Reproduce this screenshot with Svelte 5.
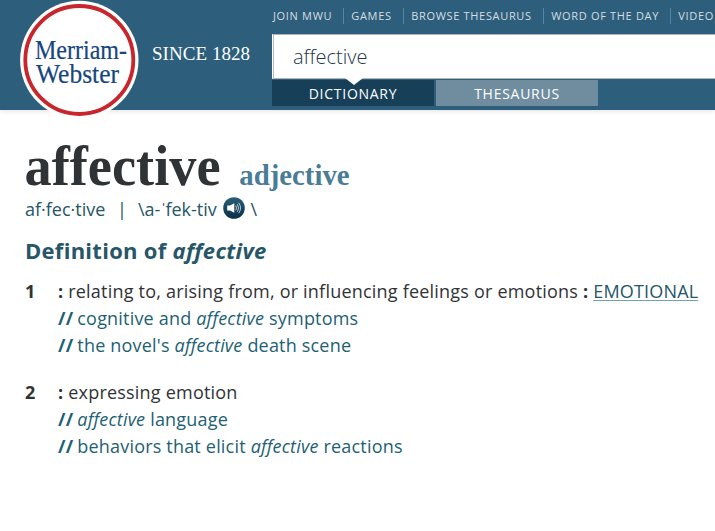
<script>
  const links = [
    { label: 'JOIN MWU', width: 70 },
    { label: 'GAMES', width: 60 },
    { label: 'BROWSE THESAURUS', width: 140 },
    { label: 'WORD OF THE DAY', width: 127 },
    { label: 'VIDEO', width: 60 }
  ];
  const senses = [
    {
      text: 'relating to, arising from, or influencing feelings or emotions',
      link: 'EMOTIONAL',
      examples: [['cognitive and ', ' symptoms'], ["the novel's ", ' death scene']]
    },
    {
      text: 'expressing emotion',
      examples: [['', ' language'], ['behaviors that elicit ', ' reactions']]
    }
  ];
</script>

<div class="page">
  <header>
    <div class="brand">
      <svg class="logo" width="120" height="120" viewBox="0 0 120 120">
        <circle cx="60.3" cy="60" r="59.2" fill="#fff" />
        <circle cx="60.3" cy="60" r="54" fill="#fff" stroke="#c9252c" stroke-width="3.8" />
        <g class="mark" fill="#15467f" stroke="#15467f" stroke-width=".2">
          <text x="16" y="59" textLength="92" lengthAdjust="spacingAndGlyphs">Merriam-</text>
          <text x="17" y="83.2" textLength="83" lengthAdjust="spacingAndGlyphs">Webster</text>
        </g>
      </svg>
      <span class="since">SINCE 1828</span>
    </div>
    <div class="tools">
      <nav>
        {#each links as l}
          <a style:width="{l.width}px">{l.label}</a>
        {/each}
      </nav>
      <div class="search">affective</div>
      <div class="tabs">
        <span class="tab active">DICTIONARY</span>
        <span class="tab">THESAURUS</span>
      </div>
    </div>
  </header>

  <main>
    <div class="entry">
      <svg class="word" width="215" height="56" viewBox="0 0 215 56">
        <text x="-.5" y="51" textLength="196" lengthAdjust="spacingAndGlyphs">affective</text>
      </svg>
      <svg class="pos" width="112" height="56" viewBox="0 0 112 56">
        <text x="-.7" y="51" textLength="110.3" lengthAdjust="spacingAndGlyphs">adjective</text>
      </svg>
    </div>
    <div class="pron">
      <span class="syll">af·​fec·​tive</span>
      <span class="bar">|</span>
      <span class="ipa">\a-<span class="stress">ˈ</span>fek-tiv</span>
      <svg width="22" height="22" viewBox="0 0 22 22">
        <defs>
          <linearGradient id="disc" x2="0" y2="1">
            <stop offset="0" stop-color="#275f79" />
            <stop offset="1" stop-color="#0c2f49" />
          </linearGradient>
        </defs>
        <circle cx="11" cy="11" r="10.8" fill="url(#disc)" />
        <path d="M4.2 8.6H7L11.3 6.2V15.8L7 13.4H4.2Z" fill="#fff" />
        <path d="M12.8 8.6Q14.3 11 12.8 13.4M14.3 7.2Q16.9 11 14.3 14.8M15.7 5.8Q19.4 11 15.7 16.2" fill="none" stroke="#dfe8ed" stroke-width=".8" />
      </svg>
      <span class="close">\</span>
    </div>
    <h2>Definition of <em>affective</em></h2>
    {#each senses as s, i}
      <section>
        <b class="num">{i + 1}</b>
        <div>
          <p class="def"><b>:</b> {s.text}{#if s.link}{' '}<b>:</b> <a class="link">{s.link}</a>{/if}</p>
          {#each s.examples as [before, after]}
            <p class="ex"><b>//</b><span>{before}<em>affective</em>{after}</span></p>
          {/each}
        </div>
      </section>
    {/each}
  </main>
</div>

<style>
  .page {
    width: 715px;
    height: 531px;
    overflow: hidden;
    background: #fff;
    font-family: 'Open Sans', sans-serif;
    color: #303336;
  }
  header {
    display: flex;
    height: 110px;
    background: #2d5f7c;
    box-shadow: 0 1px 5px rgba(0, 0, 0, .12);
  }
  .brand {
    display: flex;
    flex: 0 0 272px;
    padding-left: 19px;
    box-sizing: border-box;
  }
  .logo {
    flex: none;
    height: 120px;
  }
  .mark {
    font: 26.5px 'Liberation Serif', serif;
  }
  .since {
    margin: 43px 0 0 13px;
    font: 19px/22px 'Liberation Serif', serif;
    color: #fff;
    letter-spacing: .05px;
    white-space: nowrap;
  }
  .tools {
    flex: none;
    width: 460px;
  }
  nav {
    display: flex;
    height: 34px;
    padding-top: 8px;
    box-sizing: border-box;
  }
  nav a {
    flex: none;
    height: 16px;
    box-sizing: border-box;
    padding-left: 7.3px;
    border-left: 1px solid #5187a5;
    font-size: 11px;
    line-height: 16px;
    letter-spacing: .67px;
    color: #d5dde1;
    white-space: nowrap;
  }
  nav a:first-child {
    margin-left: 1px;
    padding-left: 0;
    border: 0;
  }
  .search {
    height: 45px;
    box-sizing: border-box;
    border: 1px solid #aeb4b9;
    border-left-color: #fff;
    box-shadow: inset 1px 0 #b3b9be;
    background: #fff;
    padding-left: 20px;
    font-size: 20px;
    font-weight: 300;
    line-height: 44px;
    color: #213848;
  }
  .tabs {
    display: flex;
    gap: 2px;
    padding-top: 1px;
  }
  .tab {
    position: relative;
    width: 162px;
    height: 26px;
    background: #708d9f;
    color: #fff;
    font-size: 14px;
    line-height: 27px;
    letter-spacing: .73px;
    text-align: center;
  }
  .tab.active {
    background: #173f58;
  }
  .tab.active::before {
    content: '';
    position: absolute;
    left: 73px;
    top: -2px;
    border: 9px solid transparent;
    border-top: 7px solid #fff;
    border-bottom: 0;
  }
  main {
    padding: 24px 0 0 25px;
  }
  .entry {
    display: flex;
    height: 56px;
  }
  .entry svg {
    overflow: visible;
  }
  .entry text {
    font-family: 'Liberation Serif', serif;
    font-weight: 700;
  }
  .word {
    font-size: 56px;
    fill: #303336;
  }
  .pos {
    font-size: 30px;
    fill: #4a7d95;
  }
  .pron {
    display: flex;
    align-items: center;
    height: 38px;
    font-size: 18px;
    line-height: 38px;
    color: #265667;
    white-space: nowrap;
  }
  .syll { width: 92px; }
  .bar { width: 21px; }
  .ipa { width: 84.5px; }
  .stress { margin-right: -1px; }
  .pron svg { margin-top: -3px; flex: none; }
  .close { margin-left: 6px; }
  h2 {
    margin: 2px 0 8px;
    font-size: 22px;
    line-height: 40px;
    letter-spacing: .28px;
    font-weight: 700;
    color: #265667;
  }
  section {
    display: flex;
    margin-bottom: 20px;
    font-size: 18px;
    line-height: 27px;
    letter-spacing: .208px;
    white-space: nowrap;
  }
  .num {
    width: 33px;
  }
  p {
    margin: 0;
  }
  .ex {
    display: flex;
    color: #225f73;
    white-space: pre;
    letter-spacing: .19px;
  }
  .ex b {
    width: 19.3px;
  }
  .link {
    color: #265667;
    text-decoration: underline;
    text-decoration-color: #6fa3b4;
    text-decoration-thickness: 1px;
    text-underline-offset: 2px;
    letter-spacing: .18px;
  }
</style>
